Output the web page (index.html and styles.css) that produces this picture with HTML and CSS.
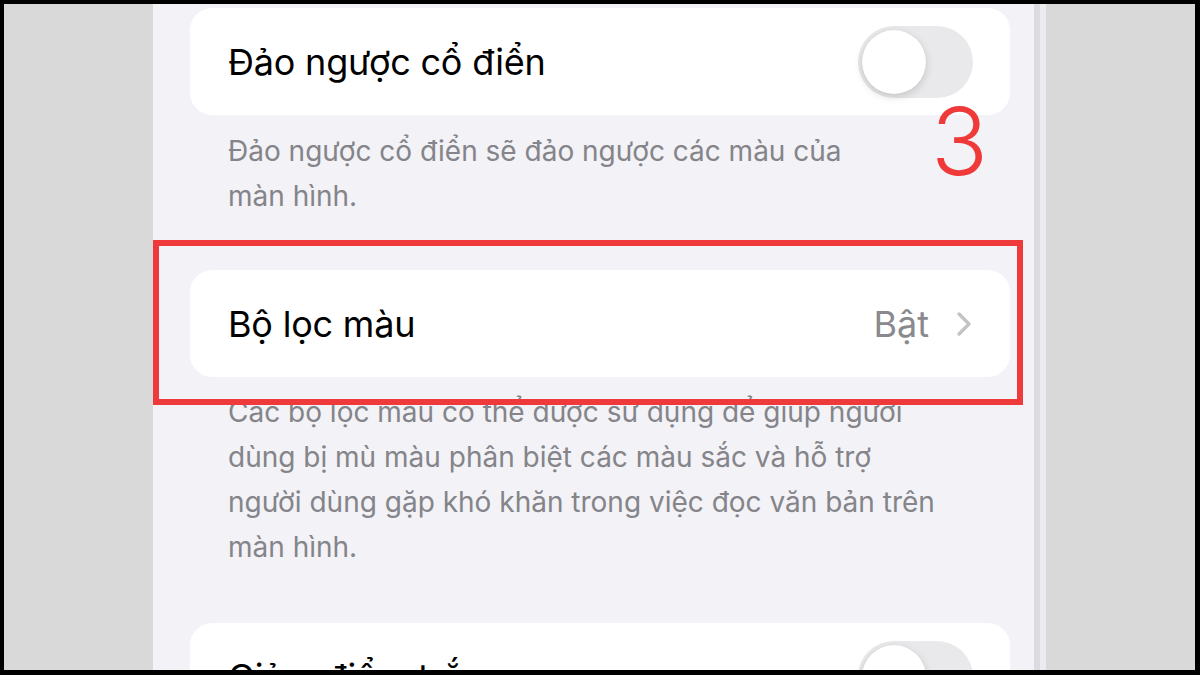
FILE: index.html
```html
<!DOCTYPE html>
<html lang="vi">
<head>
  <meta charset="UTF-8">
  <meta name="viewport" content="width=device-width, initial-scale=1.0">
  <title>Bộ lọc màu</title>
  <link rel="stylesheet" href="styles.css">
</head>
<body>
  <div class="frame">
    <div class="side"></div>
    <div class="screen">
      <div class="card">
        <span class="title">Đảo ngược cổ điển</span>
        <div class="toggle"><div class="knob"></div></div>
      </div>
      <p class="desc desc-short">Đảo ngược cổ điển sẽ đảo ngược các màu của màn hình.</p>

      <div class="card">
        <span class="title">Bộ lọc màu</span>
        <span class="value">Bật
          <svg class="chevron" width="18" height="26" viewBox="0 0 18 26">
            <path d="M4 3 L14 13 L4 23" fill="none" stroke="#c4c4c7" stroke-width="3.4" stroke-linecap="round" stroke-linejoin="round"/>
          </svg>
        </span>
      </div>
      <p class="desc desc-long">Các bộ lọc màu có thể được sử dụng để giúp người dùng bị mù màu phân biệt các màu sắc và hỗ trợ người dùng gặp khó khăn trong việc đọc văn bản trên màn hình.</p>

      <div class="card">
        <span class="title">Giảm điểm trắng</span>
        <div class="toggle"><div class="knob"></div></div>
      </div>

      <!-- chú thích -->
      <div class="step-number">3</div>
      <div class="highlight"></div>
    </div>
    <div class="edge"></div>
    <div class="side"></div>
  </div>
</body>
</html>
```

FILE: styles.css
```css
html, body {
  margin: 0;
  height: 100%;
}
body {
  background-color: #000;
  width: 1200px;
  height: 675px;
  overflow: hidden;
  font-family: Inter, "Noto Sans", sans-serif;
}
.frame {
  display: flex;
  height: 666px;
  padding: 4px 5px 5px 4px;
}
.side {
  width: 149px;
  background-color: #d9d9d9;
  flex-shrink: 0;
}
.screen {
  position: relative;
  width: 844px;
  padding: 4px 0 0 37px;
  background-color: #f2f2f7;
  overflow: hidden;
  border-right: 6px solid #dcdce0;
}
.edge {
  width: 6px;
  background-color: #ececf0;
}
.card {
  width: 745px;
  height: 107px;
  padding: 0 37px 0 38px;
  background-color: #fff;
  border-radius: 22px;
  display: flex;
  align-items: center;
  justify-content: space-between;
}
.title {
  font-size: 36px;
  color: #000;
  letter-spacing: -0.2px;
}
.toggle {
  width: 115px;
  height: 72px;
  border-radius: 36px;
  background-color: #e9e9eb;
  display: flex;
  align-items: center;
  padding-left: 4px;
  box-sizing: border-box;
}
.knob {
  width: 64px;
  height: 64px;
  border-radius: 50%;
  background-color: #fff;
  box-shadow: 0 3px 8px rgba(0, 0, 0, 0.15), 0 0 1px rgba(0, 0, 0, 0.12);
}
.value {
  display: flex;
  align-items: center;
  gap: 26px;
  font-size: 36px;
  color: #8a8a8e;
}
.desc {
  margin: 0;
  padding: 14px 40px 0 38px;
  font-size: 28px;
  line-height: 45px;
  color: #848489;
}
.desc-short {
  padding-bottom: 51px;
  width: 650px;
}
.desc-long {
  padding-top: 13px;
  padding-bottom: 53px;
  width: 720px;
}
.step-number {
  position: absolute;
  left: 778px;
  top: 90px;
  font-size: 94px;
  font-weight: 300;
  line-height: 1;
  color: #f03a3a;
}
.highlight {
  position: absolute;
  left: 0;
  top: 236px;
  width: 858px;
  height: 153px;
  border: 6px solid #ee3a3a;
}
```
